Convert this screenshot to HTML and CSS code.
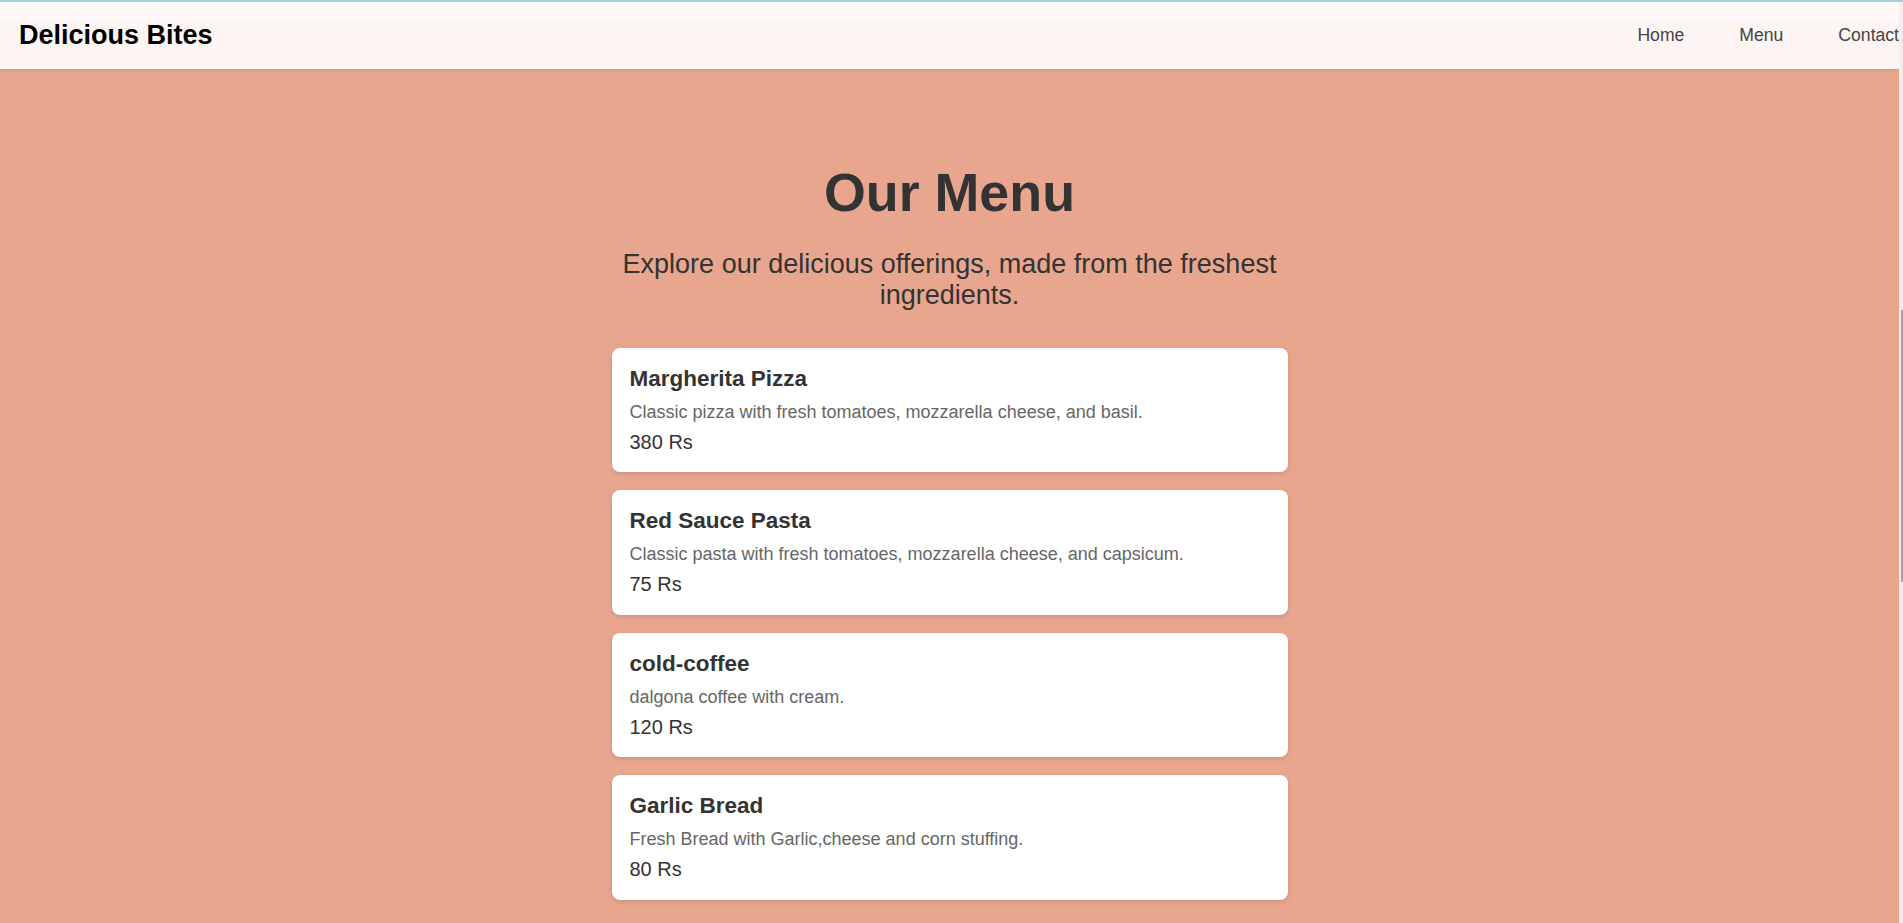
FILE: index.html
```html
<!DOCTYPE html>
<html lang="en">
<head>
<meta charset="utf-8">
<title>Delicious Bites - Menu</title>
<link rel="stylesheet" href="styles.css">
</head>
<body>
<header class="site-header">
  <div class="logo">Delicious Bites</div>
  <nav class="nav">
    <a href="#" class="nav-link">Home</a>
    <a href="#" class="nav-link">Menu</a>
    <a href="#" class="nav-link">Contact</a>
  </nav>
</header>
<main class="menu-section">
  <h1 class="menu-title">Our Menu</h1>
  <p class="menu-subtitle">Explore our delicious offerings, made from the freshest ingredients.</p>
  <div class="menu-list">
    <div class="menu-item">
      <h3 class="item-name">Margherita Pizza</h3>
      <p class="item-desc">Classic pizza with fresh tomatoes, mozzarella cheese, and basil.</p>
      <p class="item-price">380 Rs</p>
    </div>
    <div class="menu-item">
      <h3 class="item-name">Red Sauce Pasta</h3>
      <p class="item-desc">Classic pasta with fresh tomatoes, mozzarella cheese, and capsicum.</p>
      <p class="item-price">75 Rs</p>
    </div>
    <div class="menu-item">
      <h3 class="item-name">cold-coffee</h3>
      <p class="item-desc">dalgona coffee with cream.</p>
      <p class="item-price">120 Rs</p>
    </div>
    <div class="menu-item">
      <h3 class="item-name">Garlic Bread</h3>
      <p class="item-desc">Fresh Bread with Garlic,cheese and corn stuffing.</p>
      <p class="item-price">80 Rs</p>
    </div>
  </div>
</main>
<div class="scroll-track"><div class="scroll-thumb"></div></div>
</body>
</html>
```
FILE: styles.css
```css
html {
  border-top: 2px solid #a7d0d9;
}
body {
  margin: 0 4px 0 0;
  background: #e8a68e;
  font-family: "Liberation Sans", Arial, sans-serif;
  color: #333;
}
.site-header {
  display: flex;
  justify-content: space-between;
  align-items: center;
  height: 67px;
  padding-left: 19px;
  background: linear-gradient(to bottom, #fef9f8 0, #fef9f8 20px, #fdf5f3 20px, #fdf5f3 100%);
  box-shadow: 0 2px 4px rgba(0, 0, 0, 0.08);
}
.logo {
  font-size: 27px;
  font-weight: bold;
  color: #000;
}
.nav {
  display: flex;
  gap: 55px;
}
.nav-link {
  font-size: 17.6px;
  color: #444;
  text-decoration: none;
}
.menu-section {
  display: flex;
  flex-direction: column;
  align-items: center;
  padding: 92px 0 60px;
}
.menu-title {
  margin: 0;
  font-size: 53.8px;
  font-weight: bold;
  color: #333;
}
.menu-subtitle {
  margin: 25.5px 0 0;
  max-width: 700px;
  font-size: 27px;
  line-height: 31.6px;
  text-align: center;
  color: #333;
}
.menu-list {
  display: flex;
  flex-direction: column;
  gap: 18px;
  width: 676px;
  margin-top: 36px;
}
.menu-item {
  background: #fff;
  border-radius: 8px;
  padding: 18px 18px 18.6px;
  box-shadow: 0 2px 5px rgba(0, 0, 0, 0.12);
}
.item-name {
  margin: 0 0 10px;
  font-size: 22.5px;
  font-weight: bold;
  color: #333;
}
.item-desc {
  margin: 0 0 8px;
  font-size: 18px;
  color: #666;
}
.item-price {
  margin: 0;
  font-size: 20px;
  color: #333;
}
.scroll-track {
  position: fixed;
  top: 2px;
  right: 0;
  bottom: 0;
  width: 4px;
  background: #f0f0f0;
}
.scroll-thumb {
  position: absolute;
  top: 308px;
  right: 0;
  width: 2px;
  height: 272px;
  background: #a3a3a3;
}
```
